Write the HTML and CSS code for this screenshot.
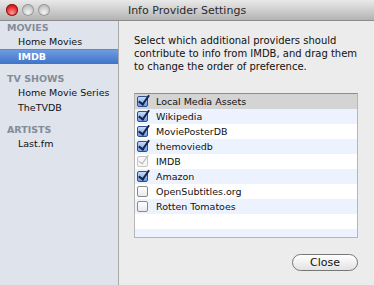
FILE: index.html
```html
<!DOCTYPE html>
<html>
  <head>
    <link rel="stylesheet" href="styles.css">
  </head>
  <body>
    <div class="window">
      <div class="titlebar">
        <div class="lights">
          <span class="light red"></span>
          <span class="light"></span>
          <span class="light"></span>
        </div>
        <div class="title">Info Provider Settings</div>
      </div>
      <div class="content">
        <div class="sidebar">
          <div class="group">MOVIES</div>
          <div class="item">Home Movies</div>
          <div class="item selected">IMDB</div>
          <div class="group">TV SHOWS</div>
          <div class="item">Home Movie Series</div>
          <div class="item">TheTVDB</div>
          <div class="group">ARTISTS</div>
          <div class="item">Last.fm</div>
        </div>
        <div class="main">
          <p class="intro">Select which additional providers should<br>contribute to info from IMDB, and drag them<br>to change the order of preference.</p>
          <div class="list">
            <div class="row current"><span class="box on"></span>Local Media Assets</div>
            <div class="row"><span class="box on"></span>Wikipedia</div>
            <div class="row"><span class="box on"></span>MoviePosterDB</div>
            <div class="row"><span class="box on"></span>themoviedb</div>
            <div class="row"><span class="box dim"></span>IMDB</div>
            <div class="row"><span class="box on"></span>Amazon</div>
            <div class="row"><span class="box"></span>OpenSubtitles.org</div>
            <div class="row"><span class="box"></span>Rotten Tomatoes</div>
            <div class="row"></div>
            <div class="row"></div>
          </div>
          <div class="buttons">
            <button class="close">Close</button>
          </div>
        </div>
      </div>
    </div>
  </body>
</html>
```
FILE: styles.css
```css
body {
  margin: 0;
  font-family: "DejaVu Sans", sans-serif;
  font-size: 10px;
  color: #111;
}

.window {
  width: 374px;
  height: 285px;
  display: flex;
  flex-direction: column;
  background: #ececec;
}

.titlebar {
  height: 20px;
  border-bottom: 1px solid #8c8c8c;
  background: linear-gradient(#e9e9e9, #cfcfcf 50%, #b3b3b3);
  display: flex;
  align-items: center;
  position: relative;
}
.lights {
  display: flex;
  gap: 4px;
  padding-left: 6px;
}
.light {
  width: 12px;
  height: 12px;
  border-radius: 50%;
  background: radial-gradient(circle at 50% 70%, #f4f4f4, #c4c4c4 60%, #a9a9a9);
  box-shadow: inset 0 0 0 1px #9a9a9a;
}
.light.red {
  background: radial-gradient(circle at 50% 75%, #ff9a9a, #e32b2b 55%, #a50d0d);
  box-shadow: inset 0 0 0 1px #8e1a1a;
}
.title {
  position: absolute;
  left: 0;
  right: 0;
  text-align: center;
  font-size: 11px;
  color: #2a2a2a;
}

.content {
  flex: 1;
  display: flex;
}

.sidebar {
  width: 118px;
  border-right: 1px solid #a9a9a9;
  background: #dee3ec;
}
.group {
  height: 13px;
  line-height: 13px;
  padding-left: 7px;
  margin-top: 8px;
  font-weight: bold;
  font-size: 9.5px;
  color: #848c99;
}
.group:first-child {
  margin-top: 0;
}
.item {
  height: 15px;
  line-height: 15px;
  padding-left: 18px;
  font-size: 9.5px;
  color: #111;
}
.item.selected {
  background: linear-gradient(#6f9ce0, #3f73c9);
  border-top: 1px solid #5b8ad4;
  height: 14px;
  line-height: 14px;
  color: #fff;
  font-weight: bold;
}

.main {
  flex: 1;
  padding: 13px 16px 0 15px;
}
.intro {
  margin: 0;
  line-height: 13px;
  font-size: 10px;
}
.list {
  margin-top: 20px;
  height: 143px;
  overflow: hidden;
  border: 1px solid #b6b6b6;
  border-top-color: #8d8d8d;
  background: #fff;
}
.row {
  height: 15px;
  line-height: 15px;
  display: flex;
  align-items: center;
  padding-left: 2px;
  font-size: 9.5px;
}
.row:nth-child(even) {
  background: #edf3fe;
}
.row.current {
  background: #d4d4d4;
}
.box {
  width: 9px;
  height: 9px;
  margin-right: 8px;
  border: 1px solid #8a8a8a;
  border-radius: 2px;
  background: linear-gradient(#fff, #e9e9e9);
  position: relative;
}
.box.on {
  border-color: #2d4f8e;
  background: linear-gradient(#c9dcf8, #6d9be3);
}
.box.on::after,
.box.dim::after {
  content: "";
  position: absolute;
  left: 3px;
  top: -4px;
  width: 4px;
  height: 10px;
  border-right: 2px solid #14244a;
  border-bottom: 2px solid #14244a;
  transform: rotate(35deg);
}
.box.dim {
  border-color: #c4c4c4;
  background: #f6f6f6;
}
.box.dim::after {
  border-color: #b9b9b9;
  border-right-width: 1px;
  border-bottom-width: 1px;
}

.buttons {
  display: flex;
  justify-content: flex-end;
  margin-top: 16px;
}
.close {
  width: 66px;
  height: 17px;
  border: 1px solid #777;
  border-radius: 9px;
  background: linear-gradient(#ffffff, #f1f1f1 50%, #e2e2e2);
  font-family: "DejaVu Sans", sans-serif;
  font-size: 11px;
  color: #111;
  padding: 0;
}
```
